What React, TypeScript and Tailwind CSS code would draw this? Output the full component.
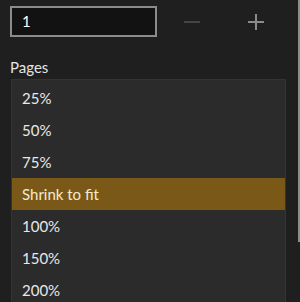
const OPTIONS = ['25%', '50%', '75%', 'Shrink to fit', '100%', '150%', '200%'];

export default function App() {
  const selected = 'Shrink to fit';

  return (
    <div
      className="flex h-[302px] w-[300px] overflow-hidden bg-[#1f1f1f] text-[15px] text-[#e8e8e8]"
      style={{ fontFamily: 'Lato, "Noto Sans", sans-serif' }}
    >
      <div className="flex-1 pl-[10px] pt-[6px]">
        {/* Number input with stepper */}
        <div className="flex items-center">
          <div className="flex h-[31px] w-[147px] items-center border-2 border-[#8c8c8c] bg-[#121212] pl-[10px] leading-none text-white">
            1
          </div>
          <div className="ml-[27px] h-[2px] w-[16px] bg-[#444444]" />
          <div className="relative ml-[48px] h-[16px] w-[16px]">
            <div className="absolute left-0 top-[7px] h-[2px] w-[16px] bg-[#8a8a8a]" />
            <div className="absolute left-[7px] top-0 h-[16px] w-[2px] bg-[#8a8a8a]" />
          </div>
        </div>

        <div className="mt-[20px] leading-[20px] text-[#e4e4e4]">Pages</div>

        {/* Dropdown list */}
        <div className="ml-[1px] mt-[2px] w-[275px] border border-[#333333] bg-[#2b2b2b] pt-[2px]">
          {OPTIONS.map((o) => (
            <div
              key={o}
              className={
                o === selected
                  ? 'flex h-[32px] items-center bg-[#7a5818] pl-[10px] text-[#f3ead2]'
                  : 'flex h-[32px] items-center pl-[10px] text-[#e8e8e8]'
              }
            >
              {o}
            </div>
          ))}
        </div>
      </div>

      {/* Scrollbar */}
      <div className="w-[2px] shrink-0">
        <div className="h-[242px] w-[2px] bg-[#8e8e8e]" />
      </div>
    </div>
  );
}
